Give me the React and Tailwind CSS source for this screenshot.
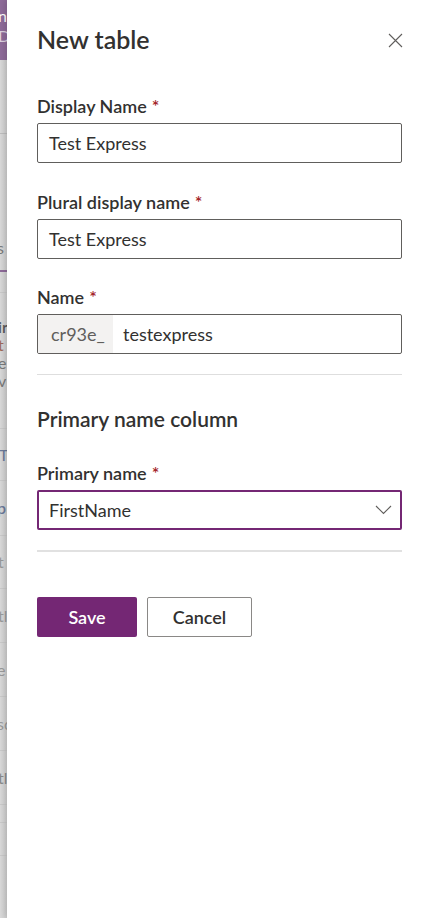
import React from 'react';

const Req = () => <span className="text-[#a4262c] ml-[5px]">*</span>;

const Label = ({ children, className = '' }) => (
  <div className={`text-[18px] leading-[24px] font-semibold text-[#323130] ${className}`}>
    {children}
    <Req />
  </div>
);

const TextInput = ({ value }) => (
  <div className="h-[40px] border border-[#605e5c] rounded-[2px] flex items-center px-[11px] text-[18px] text-[#323130]">
    {value}
  </div>
);

// the dimmed page behind the panel, only a sliver shows
const BackStrip = () => (
  <div className="w-[7px] shrink-0 h-full overflow-hidden bg-gradient-to-r from-[#d9d9d9] to-[#cfcfcf] flex flex-col text-[16px] leading-[20px] text-[#7a7a7a]">
    <div className="h-[60px] bg-[#8e6b99] text-white flex flex-col pt-[6px]">
      <span className="-ml-[2px]">n</span>
      <span className="-ml-[2px] text-[#dcd2e0]">D</span>
    </div>
    <div className="h-[74px] border-b border-[#bdbdbd]" />
    <div className="h-[138px] flex flex-col justify-end border-b-2 border-[#8e6b99]">
      <span className="-ml-[3px] mb-[12px]">s</span>
    </div>
    <div className="h-[21px] border-b border-[#c9c9c9]" />
    <div className="h-[135px] flex flex-col pt-[25px] leading-[18px]">
      <span className="-ml-[2px] font-semibold text-[#5b5b5b]">ir</span>
      <span className="-ml-[2px] text-[#a06a5a]">t</span>
      <span className="-ml-[2px]">e</span>
      <span className="-ml-[2px]">v</span>
    </div>
    <div className="h-[52px] border-t border-[#c9c9c9] flex items-center">
      <span className="-ml-[1px] text-[#6b7a9a]">T</span>
    </div>
    <div className="h-[55px] border-t border-[#c9c9c9] flex items-center">
      <span className="-ml-[3px] font-semibold text-[#6b7a9a]">p</span>
    </div>
    <div className="h-[53px] border-t border-[#c9c9c9] flex items-center">
      <span className="-ml-[2px] text-[#9a9a9a]">t</span>
    </div>
    <div className="h-[54px] border-t border-[#c9c9c9] flex items-center">
      <span className="-ml-[2px] text-[#9a9a9a]">tl</span>
    </div>
    <div className="h-[54px] border-t border-[#c9c9c9] flex items-center">
      <span className="-ml-[3px] text-[#9a9a9a]">e</span>
    </div>
    <div className="h-[54px] border-t border-[#c9c9c9] flex items-center">
      <span className="-ml-[3px] text-[#9a9a9a]">sc</span>
    </div>
    <div className="h-[54px] border-t border-[#c9c9c9] flex items-center">
      <span className="-ml-[2px] text-[#8a8a8a]">tl</span>
    </div>
    <div className="h-[18px] border-t border-[#c9c9c9]" />
    <div className="h-[33px] border-t border-[#c9c9c9]" />
    <div className="flex-1 border-t border-[#c9c9c9]" />
  </div>
);

export default function App() {
  return (
    <div
      className="w-[430px] h-[918px] flex bg-white overflow-hidden"
      style={{ fontFamily: 'Lato, "Noto Sans", sans-serif' }}
    >
      <BackStrip />

      {/* Panel */}
      <div className="flex-1 bg-white pl-[30px] pr-[28px] pt-[22px] shadow-[-2px_0_6px_rgba(0,0,0,0.15)] relative">
        {/* Header */}
        <div className="flex items-center justify-between h-[36px]">
          <h1 className="text-[25px] font-semibold text-[#323130]">New table</h1>
          <button className="w-[16px] h-[16px] mr-[-1px] flex items-center justify-center">
            <svg width="15" height="15" viewBox="0 0 15 15">
              <path d="M1 1 L14 14 M14 1 L1 14" stroke="#605e5c" strokeWidth="1.1" fill="none" />
            </svg>
          </button>
        </div>

        <Label className="mt-[36px] mb-[5px]">Display Name</Label>
        <TextInput value="Test Express" />

        <Label className="mt-[27px] mb-[5px]">Plural display name</Label>
        <TextInput value="Test Express" />

        <Label className="mt-[26px] mb-[5px]">Name</Label>
        <div className="h-[40px] border border-[#605e5c] rounded-[2px] flex text-[18px] overflow-hidden">
          <div className="w-[75px] bg-[#f3f2f1] text-[#605e5c] flex items-center pl-[13px]">cr93e_</div>
          <div className="flex-1 flex items-center pl-[10px] text-[#323130]">testexpress</div>
        </div>

        <div className="h-[1px] bg-[#dedede] mt-[20px]" />

        <h2 className="text-[21px] leading-[26px] font-semibold text-[#323130] mt-[31px]">Primary name column</h2>

        <Label className="mt-[29px] mb-[5px]">Primary name</Label>
        <div className="h-[40px] border-2 border-[#742774] rounded-[2px] flex items-center justify-between pl-[10px] pr-[8px] text-[18px] text-[#323130]">
          <span>FirstName</span>
          <svg width="17" height="10" viewBox="0 0 17 10">
            <path d="M1 1 L8.5 8.5 L16 1" stroke="#605e5c" strokeWidth="1.1" fill="none" />
          </svg>
        </div>

        <div className="h-[2px] bg-[#e1e1e1] mt-[20px]" />

        <div className="flex gap-[10px] mt-[45px]">
          <button className="w-[100px] h-[40px] bg-[#742774] rounded-[2px] text-white text-[18px] font-semibold">
            Save
          </button>
          <button className="w-[105px] h-[40px] bg-white border border-[#8a8886] rounded-[2px] text-[#323130] text-[18px] font-semibold">
            Cancel
          </button>
        </div>
      </div>
    </div>
  );
}
